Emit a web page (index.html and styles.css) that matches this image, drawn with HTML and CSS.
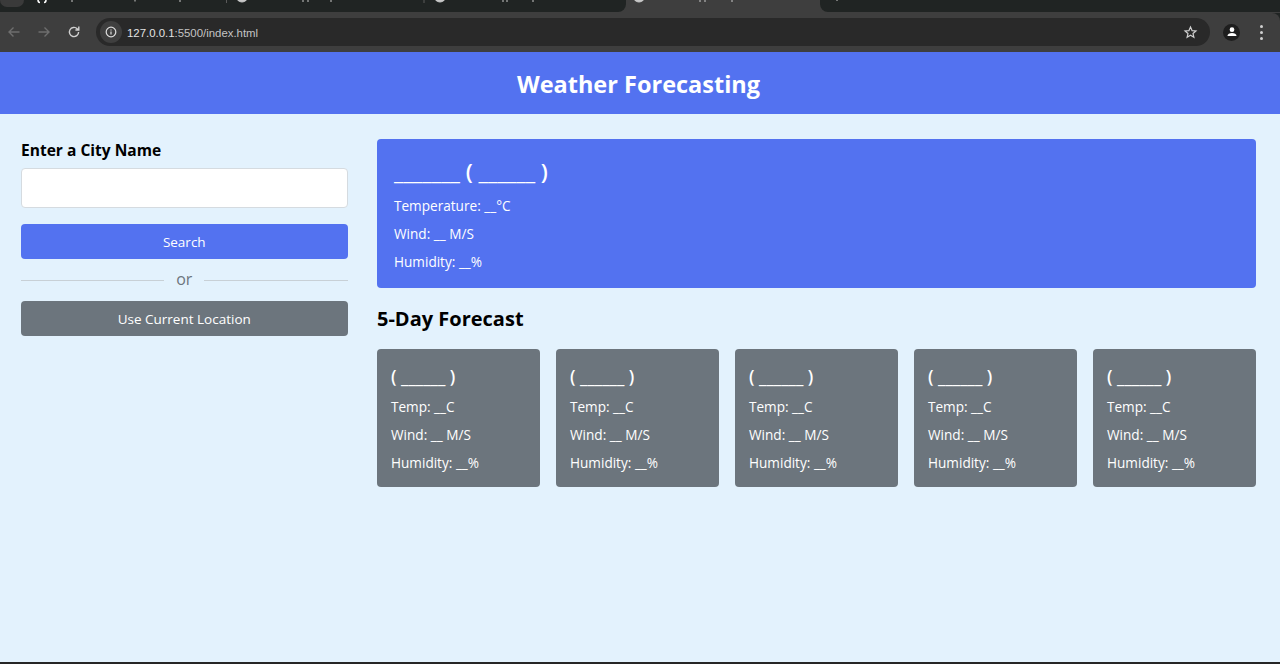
FILE: index.html
```html
<!DOCTYPE html>
<html lang="en">
<head>
<meta charset="UTF-8">
<meta name="viewport" content="width=device-width, initial-scale=1.0">
<title>Weather Forecasting</title>
<link rel="stylesheet" href="styles.css">
</head>
<body>
<!-- Browser chrome: the tab labels are cropped off, only their lowest pixels show -->
<div class="chrome">
  <div class="tabstrip">
    <div class="tabs-left">
      <svg class="tab-marks tab-one" viewBox="0 0 227 12">
        <rect class="stub" x="0" y="-8" width="24" height="15" rx="7"/>
        <path class="favicon" d="M38 0c0 2 .5 2.500 2 2.500M46 0c0 2-.5 2.500-2 2.500"/>
        <path d="M72 0v2M135 0v1.500M180 0v2"/>
        <path class="sep" d="M226.500 0v3"/>
      </svg>
      <svg class="tab-marks tab-two" viewBox="0 0 198 12">
        <circle cx="15" cy="-4" r="6"/>
        <path d="M76 0v2M81 0v2M104 0v2"/>
        <path class="sep" d="M197 0v3"/>
      </svg>
      <svg class="tab-marks tab-three" viewBox="0 0 201 12">
        <circle cx="15" cy="-4" r="6"/>
        <path d="M78 0v2M82 0v2M108 0v2"/>
      </svg>
    </div>
    <div class="tab-active">
      <svg class="tab-marks" viewBox="0 0 194 12">
        <circle cx="13" cy="-4" r="6"/>
        <path d="M74 0v2M79 0v2M106 0v2"/>
      </svg>
    </div>
    <div class="tabs-right">
      <svg class="tab-marks tab-next" viewBox="0 0 40 12"><path d="M17 0v1"/></svg>
    </div>
  </div>
  <div class="toolbar">
    <svg class="nav-icon dim" viewBox="0 0 16 16"><path d="M13.500 8H3M7.500 3.500L3 8l4.500 4.500"/></svg>
    <svg class="nav-icon dim" viewBox="0 0 16 16"><path d="M2.500 8H13M8.500 3.500L13 8l-4.500 4.500"/></svg>
    <svg class="nav-icon" viewBox="0 0 16 16"><path d="M12.600 8a4.600 4.600 0 1 1-1.400-3.300L12.800 6M12.800 2.600V6H9.400"/></svg>
    <div class="omnibox">
      <span class="info-badge">
        <svg viewBox="0 0 16 16"><circle cx="8" cy="8" r="5.500"/><path d="M8 7.400v3.400M8 5v1.200"/></svg>
      </span>
      <span class="url">127.0.0.1<span class="url-dim">:5500/index.html</span></span>
      <svg class="star" viewBox="0 0 16 16"><path d="M8 2.200l1.700 3.800 4.100.4-3.100 2.700.9 4L8 11l-3.600 2.100.9-4-3.100-2.700 4.100-.4z"/></svg>
    </div>
    <span class="avatar">
      <svg viewBox="0 0 16 16"><circle cx="8" cy="5.400" r="2.700"/><path d="M2.800 12.600c0-2.200 2.400-3.400 5.200-3.400s5.200 1.200 5.200 3.400z"/></svg>
    </span>
    <div class="kebab"><i></i><i></i><i></i></div>
  </div>
</div>

<!-- Page -->
<h1 class="page-title">Weather Forecasting</h1>
<div class="container">
  <div class="weather-input">
    <h3>Enter a City Name</h3>
    <input type="text" class="city-input">
    <button class="search-btn">Search</button>
    <div class="separator"><span>or</span></div>
    <button class="location-btn">Use Current Location</button>
  </div>
  <div class="weather-data">
    <div class="current-weather">
      <h2>_______ ( ______ )</h2>
      <p>Temperature: __°C</p>
      <p>Wind: __ M/S</p>
      <p>Humidity: __%</p>
    </div>
    <h2 class="forecast-heading">5-Day Forecast</h2>
    <div class="weather-cards">
      <div class="card"><h3>( ______ )</h3><p>Temp: __C</p><p>Wind: __ M/S</p><p>Humidity: __%</p></div>
      <div class="card"><h3>( ______ )</h3><p>Temp: __C</p><p>Wind: __ M/S</p><p>Humidity: __%</p></div>
      <div class="card"><h3>( ______ )</h3><p>Temp: __C</p><p>Wind: __ M/S</p><p>Humidity: __%</p></div>
      <div class="card"><h3>( ______ )</h3><p>Temp: __C</p><p>Wind: __ M/S</p><p>Humidity: __%</p></div>
      <div class="card"><h3>( ______ )</h3><p>Temp: __C</p><p>Wind: __ M/S</p><p>Humidity: __%</p></div>
    </div>
  </div>
</div>
<div class="taskbar-edge"></div>
</body>
</html>
```
FILE: styles.css
```css
* {
  box-sizing: border-box;
  margin: 0;
  padding: 0;
}

html,
body {
  height: 664px;
  overflow: hidden;
}

body {
  font-family: "Open Sans", sans-serif;
  background: #e3f2fd;
  display: flex;
  flex-direction: column;
}

/* browser chrome */
.chrome {
  flex: none;
  background: #202423;
}

.tabstrip {
  height: 13px;
  display: flex;
  background: #3e3e3e;
}

.tabs-left,
.tabs-right {
  height: 12px;
  display: flex;
  background: #202423;
}

.tabs-left {
  width: 626px;
  border-radius: 0 0 8px 0;
}

.tabs-right {
  flex: 1;
  border-radius: 0 0 0 8px;
}

.tab-active {
  width: 194px;
}

.tab-marks {
  display: block;
  height: 12px;
  fill: #c8c8c8;
  stroke: #c8c8c8;
  stroke-width: 1;
}

.tab-one {
  width: 227px;
}

.tab-two {
  width: 198px;
}

.tab-three {
  width: 201px;
}

.tab-active .tab-marks {
  width: 194px;
}

.tab-next {
  width: 40px;
}

.tab-marks .stub {
  fill: #3a3a3a;
  stroke: none;
}

.tab-marks .sep {
  stroke: #5a5a5a;
}

.tab-marks .favicon {
  fill: none;
  stroke: #fff;
  stroke-width: 1.500;
}

.toolbar {
  height: 39px;
  background: #3e3e3e;
  border-radius: 0 8px 0 0;
  display: flex;
  align-items: center;
  padding: 0 0 1px 6px;
}

.nav-icon {
  width: 16px;
  height: 16px;
  margin-right: 14px;
  fill: none;
  stroke: #d0d0d0;
  stroke-width: 1.400;
}

.nav-icon.dim {
  stroke: #6e6e6e;
}

.omnibox {
  width: 1114px;
  height: 28px;
  background: #292929;
  border-radius: 14px;
  display: flex;
  align-items: center;
  padding: 0 12px 0 4px;
}

.info-badge {
  width: 22px;
  height: 22px;
  border-radius: 50%;
  background: #3f3f3f;
  display: flex;
  align-items: center;
  justify-content: center;
}

.info-badge svg {
  width: 14px;
  height: 14px;
  fill: none;
  stroke: #dcdcdc;
  stroke-width: 1.400;
}

.url {
  margin: 1px 0 0 5px;
  flex: 1;
  font-family: "Liberation Sans", sans-serif;
  font-size: 11.400px;
  color: #e3e3e3;
}

.url-dim {
  color: #c4c4c4;
}

.star {
  width: 15px;
  height: 15px;
  fill: none;
  stroke: #d0d0d0;
  stroke-width: 1.300;
}

.avatar {
  width: 17px;
  height: 17px;
  margin-left: 13px;
  border-radius: 50%;
  background: #1e1e1e;
  display: flex;
  align-items: center;
  justify-content: center;
}

.avatar svg {
  width: 14px;
  height: 14px;
  fill: #fff;
}

.kebab {
  margin-left: 20px;
  display: flex;
  flex-direction: column;
  gap: 3px;
}

.kebab i {
  display: block;
  width: 3px;
  height: 3px;
  border-radius: 50%;
  background: #d0d0d0;
}

/* page */
.page-title {
  height: 62px;
  flex: none;
  padding: 1px 3px 0 0;
  background: #5372f0;
  color: #fff;
  font-size: 23.500px;
  font-weight: 700;
  line-height: 62px;
  text-align: center;
}

.container {
  display: flex;
  gap: 29.500px;
  padding: 25px 24px 0 21px;
  flex: 1;
}

.weather-input {
  width: 326.500px;
  flex: none;
}

.weather-input h3 {
  font-size: 15.550px;
  font-weight: 700;
  line-height: 22px;
  color: #000;
}

.city-input {
  display: block;
  width: 100%;
  height: 40px;
  margin: 7px 0 16px;
  background: #fff;
  border: 1px solid #d5dbe0;
  border-radius: 4px;
}

.search-btn,
.location-btn {
  display: block;
  width: 100%;
  height: 35px;
  border: none;
  border-radius: 4px;
  color: #fff;
  font-family: "Open Sans", sans-serif;
  font-size: 13.500px;
}

.search-btn {
  background: #5372f0;
}

.location-btn {
  background: #6c757d;
}

.separator {
  height: 42px;
  display: flex;
  align-items: center;
  justify-content: center;
  gap: 12px;
  color: #6c757d;
  font-size: 16px;
}

.separator span {
  margin-top: -2px;
}

.separator::before,
.separator::after {
  content: "";
  flex: 1;
  height: 1px;
  background: #c8d0d6;
}

.weather-data {
  flex: 1;
  min-width: 0;
}

.current-weather {
  height: 148.500px;
  background: #5372f0;
  border-radius: 4px;
  color: #fff;
  padding: 19px 17px 0;
}

.current-weather h2 {
  font-size: 22.200px;
  font-weight: 600;
  line-height: 27px;
  margin-bottom: 12px;
}

.current-weather p,
.card p {
  font-size: 13.600px;
  line-height: 18px;
  margin-bottom: 10px;
}

.forecast-heading {
  font-size: 20px;
  font-weight: 700;
  line-height: 26px;
  margin: 18.500px 0 16.500px;
  color: #000;
}

.weather-cards {
  display: flex;
  gap: 16px;
}

.card {
  flex: 1;
  height: 138.500px;
  background: #6c757d;
  border-radius: 4px;
  color: #fff;
  padding: 15px 14px 0;
}

.card h3 {
  font-size: 17.400px;
  font-weight: 600;
  line-height: 24px;
  margin-bottom: 10px;
}

.taskbar-edge {
  height: 2px;
  flex: none;
  background: #262626;
}
```
